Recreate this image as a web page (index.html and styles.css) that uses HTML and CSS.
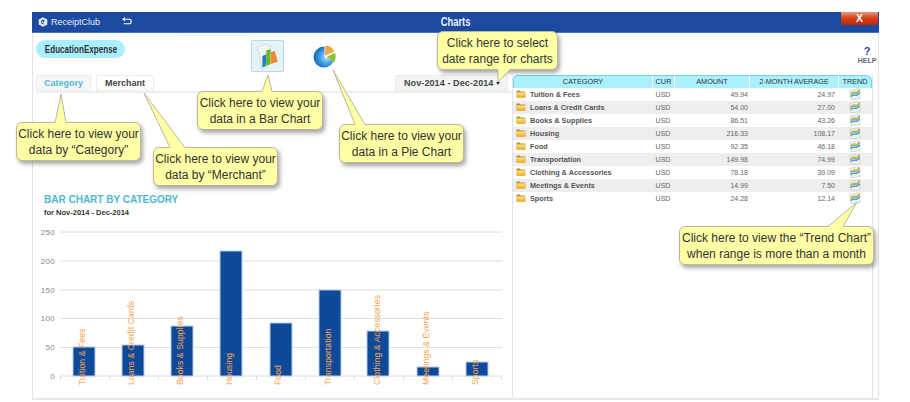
FILE: index.html
```html
<!DOCTYPE html>
<html lang="en">
<head>
<meta charset="utf-8">
<title>Charts</title>
<link rel="stylesheet" href="styles.css">
</head>
<body>
<svg class="defs" width="0" height="0" aria-hidden="true">
  <defs>
    <linearGradient id="fold" x1="0" y1="0" x2="0" y2="1"><stop offset="0" stop-color="#ffe88a"/><stop offset="1" stop-color="#eeaa1c"/></linearGradient>
    <radialGradient id="disc" cx=".62" cy=".52" r=".62"><stop offset="0" stop-color="#c6e8fa"/><stop offset=".45" stop-color="#4aa6ea"/><stop offset="1" stop-color="#0c62bb"/></radialGradient>
    <symbol id="folder" viewBox="0 0 11 9">
      <path d="M.5 2V1.200Q.5.5 1.200.5H4L5 1.600H9.600Q10.400 1.600 10.400 2.400V8.500H.5Z" fill="#b98a2a"/>
      <rect x=".7" y="2.700" width="9.600" height="5.800" fill="url(#fold)"/>
    </symbol>
    <symbol id="trend" viewBox="0 0 12 12">
      <rect x="1.400" y="1.500" width="9.200" height="9.800" fill="#eef0f2" stroke="#c4c8cc" stroke-width=".6" transform="rotate(-8 6 6)"/>
      <path d="M1.500 5.600 5 3.800 7.500 4.400 11 1.400" fill="none" stroke="#f08a2a" stroke-width="1"/>
      <path d="M1.500 6.800 5 5 7.500 5.600 11 2.700" fill="none" stroke="#6cc04a" stroke-width="1.100"/>
      <path d="M1.500 8.600 5 7 7.500 7.400 11 5" fill="none" stroke="#2f86d8" stroke-width="1.100"/>
    </symbol>
  </defs>
</svg>

<main class="window">
  <header class="titlebar">
    <div class="brand">
      <svg class="logo" viewBox="0 0 10 10" aria-hidden="true"><path d="M5 .2 9.300 2.600V7.400L5 9.800.7 7.400V2.600Z" fill="#dfe8f6"/><path d="M5 2.400 7.200 3.700 5.400 4.800 5.400 7.400 3.200 6.200V3.700Z" fill="#1c4a9e"/><path d="M3.900 4 5 4.600V6.100L3.900 5.500Z" fill="#dfe8f6"/></svg>
      <span class="brand-name">ReceiptClub</span>
      <svg class="back" viewBox="0 0 10 8" aria-hidden="true"><path d="M3 .6 1 2.200 3 3.800M1 2.200H7.200Q9.200 2.200 9.200 4.400 9.200 6.800 7.200 6.800H1.600" fill="none" stroke="#fff" stroke-width="1.100"/></svg>
    </div>
    <h1 class="title"><span class="squeeze">Charts</span></h1>
    <button class="close" type="button">X</button>
  </header>

  <div class="content">
    <section class="left">
      <div class="toolbar">
        <span class="pill"><span class="squeeze">EducationExpense</span></span>
        <button class="chart-btn active" type="button" aria-label="Bar chart">
          <svg viewBox="0 0 22 22" aria-hidden="true">
            <path d="M2 3 8 .8 14 2 11 21 6 22Z" fill="#f4f5f3" stroke="#c9cdd0" stroke-width=".5"/>
            <path d="M6.500 11 10 9.500 9.500 20 6.500 21Z" fill="#1f82cf"/>
            <path d="M10 6 13.800 5 13.300 18.500 9.500 19.500Z" fill="#6db52f"/>
            <path d="M14 7.500 17.500 6.500 20 16 13.500 18Z" fill="#ee8a34"/>
          </svg>
        </button>
        <button class="chart-btn pie" type="button" aria-label="Pie chart">
          <svg viewBox="0 0 22 22" aria-hidden="true">
            <circle cx="10.500" cy="11.500" r="10" fill="url(#disc)"/>
            <path d="M11 11 11 0A11 11 0 0 1 22 17Z" fill="#fff"/>
            <path d="M11.500 10 11.800 .8A9.500 9.500 0 0 1 20.500 6.500Z" fill="#f3a641"/>
            <path d="M13 11.500 21 7.500A10 10 0 0 1 20 16.500Z" fill="#87c23c"/>
          </svg>
        </button>
      </div>

      <div class="tabs">
        <span class="tab cat current">Category</span>
        <span class="tab mer">Merchant</span>
        <span class="tab range">Nov-2014 - Dec-2014 <i class="caret"></i></span>
      </div>

      <h2 class="chart-title">BAR CHART BY CATEGORY</h2>
      <p class="chart-sub">for Nov-2014 - Dec-2014</p>

      <svg class="chart" width="476" height="176" viewBox="36 217 476 176" role="img" aria-label="Bar chart by category">
        <g class="grid">
          <path d="M60 232H502M60 261H502M60 290H502M60 318.500H502M60 347.500H502M60 376H502"/>
          <path d="M60.500 376v4M109.500 376v4M158.500 376v4M207.500 376v4M256.500 376v4M305.500 376v4M354.500 376v4M403.500 376v4M452.500 376v4M501.500 376v4"/>
        </g>
        <g class="y-labels">
          <text x="55" y="235">250</text><text x="55" y="264">200</text><text x="55" y="293">150</text><text x="55" y="321">100</text><text x="55" y="350">50</text><text x="55" y="379">0</text>
        </g>
        <g class="bars">
          <rect x="73" y="347" width="22" height="29"/>
          <rect x="122" y="345" width="22" height="31"/>
          <rect x="171" y="326" width="22" height="50"/>
          <rect x="220" y="251" width="22" height="125"/>
          <rect x="270" y="323" width="22" height="53"/>
          <rect x="319" y="290" width="22" height="86"/>
          <rect x="367" y="331" width="22" height="45"/>
          <rect x="417" y="367" width="22" height="9"/>
          <rect x="466" y="362" width="22" height="14"/>
        </g>
        <g class="x-labels">
          <text transform="translate(85 385) rotate(-90)">Tuition &amp; Fees</text>
          <text transform="translate(134 385) rotate(-90)">Loans &amp; Credit Cards</text>
          <text transform="translate(183 385) rotate(-90)">Books &amp; Supplies</text>
          <text transform="translate(232 385) rotate(-90)">Housing</text>
          <text transform="translate(281 385) rotate(-90)">Food</text>
          <text transform="translate(331 385) rotate(-90)">Transportation</text>
          <text transform="translate(380 385) rotate(-90)">Clothing &amp; Accessories</text>
          <text transform="translate(429 385) rotate(-90)">Meetings &amp; Events</text>
          <text transform="translate(478 385) rotate(-90)">Sports</text>
        </g>
      </svg>
    </section>

    <section class="right">
      <div class="right-body">
        <table class="data">
          <thead>
            <tr><th class="c-cat">CATEGORY</th><th class="c-cur">CUR</th><th class="c-amt">AMOUNT</th><th class="c-avg">2-MONTH AVERAGE</th><th class="c-trend">TREND</th></tr>
          </thead>
          <tbody>
            <tr><td class="name"><svg class="folder"><use href="#folder"/></svg>Tuition &amp; Fees</td><td class="cur">USD</td><td class="amt">49.94</td><td class="avg">24.97</td><td class="tr"><svg class="trend"><use href="#trend"/></svg></td></tr>
            <tr><td class="name"><svg class="folder"><use href="#folder"/></svg>Loans &amp; Credit Cards</td><td class="cur">USD</td><td class="amt">54.00</td><td class="avg">27.00</td><td class="tr"><svg class="trend"><use href="#trend"/></svg></td></tr>
            <tr><td class="name"><svg class="folder"><use href="#folder"/></svg>Books &amp; Supplies</td><td class="cur">USD</td><td class="amt">86.51</td><td class="avg">43.26</td><td class="tr"><svg class="trend"><use href="#trend"/></svg></td></tr>
            <tr><td class="name"><svg class="folder"><use href="#folder"/></svg>Housing</td><td class="cur">USD</td><td class="amt">216.33</td><td class="avg">108.17</td><td class="tr"><svg class="trend"><use href="#trend"/></svg></td></tr>
            <tr><td class="name"><svg class="folder"><use href="#folder"/></svg>Food</td><td class="cur">USD</td><td class="amt">92.35</td><td class="avg">46.18</td><td class="tr"><svg class="trend"><use href="#trend"/></svg></td></tr>
            <tr><td class="name"><svg class="folder"><use href="#folder"/></svg>Transportation</td><td class="cur">USD</td><td class="amt">149.98</td><td class="avg">74.99</td><td class="tr"><svg class="trend"><use href="#trend"/></svg></td></tr>
            <tr><td class="name"><svg class="folder"><use href="#folder"/></svg>Clothing &amp; Accessories</td><td class="cur">USD</td><td class="amt">78.18</td><td class="avg">39.09</td><td class="tr"><svg class="trend"><use href="#trend"/></svg></td></tr>
            <tr><td class="name"><svg class="folder"><use href="#folder"/></svg>Meetings &amp; Events</td><td class="cur">USD</td><td class="amt">14.99</td><td class="avg">7.50</td><td class="tr"><svg class="trend"><use href="#trend"/></svg></td></tr>
            <tr><td class="name"><svg class="folder"><use href="#folder"/></svg>Sports</td><td class="cur">USD</td><td class="amt">24.28</td><td class="avg">12.14</td><td class="tr"><svg class="trend"><use href="#trend"/></svg></td></tr>
          </tbody>
        </table>
      </div>
    </section>

    <div class="help"><span class="help-mark">?</span><span class="help-label">HELP</span></div>
  </div>
</main>

<div class="callout co-category">Click here to view your<br>data by “Category”</div>
<div class="callout co-merchant">Click here to view your<br>data by “Merchant”</div>
<div class="callout co-bar">Click here to view your<br>data in a Bar Chart</div>
<div class="callout co-pie">Click here to view your<br>data in a Pie Chart</div>
<div class="callout co-date">Click here to select<br>date range for charts</div>
<div class="callout co-trend">Click here to view the “Trend Chart”<br>when range is more than a month</div>

<svg class="tails" width="910" height="402" viewBox="0 0 910 402" aria-hidden="true">
  <g class="tail-fill">
    <path d="M55 123 61 94 66 123Z"/>
    <path d="M170 148 144 93 185 148Z"/>
    <path d="M262 92 268 75 272 92Z"/>
    <path d="M355 125 333 70 365 125Z"/>
    <path d="M498 69 498 82 510 69Z"/>
    <path d="M828 227 857 202 843 227Z"/>
  </g>
  <g class="tail-line">
    <path d="M55 122.500 61 94 66 122.500"/>
    <path d="M170 147.500 144 93 185 147.500"/>
    <path d="M262 91.500 268 75 272 91.500"/>
    <path d="M355 124.500 333 70 365 124.500"/>
    <path d="M498 70 498 82 510 70"/>
    <path d="M828 226.500 857 202 843 226.500"/>
  </g>
</svg>
</body>
</html>
```
FILE: styles.css
```css
* { box-sizing: border-box; }
html, body { margin: 0; padding: 0; background: #fff; }
body { width: 910px; height: 402px; overflow: hidden; position: relative; font-family: "Liberation Sans", Arial, sans-serif; }
.defs { position: absolute; }
.squeeze { display: inline-block; white-space: nowrap; }

.window { margin: 12px 0 0 32px; width: 847px; height: 388px; display: flex; flex-direction: column; }
.titlebar { height: 21px; flex: none; background: #1c4a9e; border-bottom: 1px solid #3f74c4; display: flex; align-items: flex-start; position: relative; }
.brand { display: flex; align-items: center; height: 20px; padding-left: 6px; width: 380px; }
.logo { width: 10px; height: 10px; }
.brand-name { margin-left: 3px; color: #e4ebf7; font-size: 9px; width: 64px; }
.back { width: 10px; height: 8px; margin-left: 7px; margin-top: -2px; }
.title { margin: 0; width: 88px; text-align: center; color: #e8eef9; font-size: 13px; line-height: 20px; font-weight: bold; }
.title .squeeze { transform: scaleX(.72); }
.close { position: absolute; right: 1px; top: 0; width: 37px; height: 13px; padding: 0; border: 0; border-radius: 0 0 3px 3px; background: linear-gradient(#e59a7c, #d5451c 45%, #b82a08); color: #fff; font: bold 10.500px/13px "Liberation Sans", sans-serif; }

.content { flex: 1; display: grid; grid-template-columns: 479px 361px; border-left: 1px solid #e3e3e3; border-right: 1px solid #e3e3e3; border-bottom: 2px solid #e8e8e8; position: relative; }
.content::before { content: ""; position: absolute; left: 150px; top: 2px; width: 58px; height: 1px; background: #f0f0f0; }
.left { padding: 7px 0 0 3px; min-width: 0; }
.right { padding-top: 42px; display: flex; }
.right-body { flex: 1; border-left: 1px solid #e3e3e3; border-right: 1px solid #e3e3e3; }

.toolbar { display: flex; align-items: flex-start; height: 36px; }
.pill { width: 89px; height: 18px; border-radius: 9px; background: #a9efff; color: #333; font-size: 10.500px; font-weight: bold; line-height: 18px; text-align: center; overflow: hidden; }
.pill .squeeze { transform: scaleX(.77); margin: 0 -10px; }
.chart-btn { width: 33px; height: 32px; padding: 2px 3px; background: #e6f3fb; border: 1px solid #b5d8ee; border-radius: 2px; flex: none; margin-left: 126px; }
.chart-btn.pie { width: 23px; height: 23px; padding: 0; margin: 5px 0 0 29px; background: none; border: 0; }
.chart-btn svg { width: 100%; height: 100%; display: block; }
.help { position: absolute; right: 1px; top: 12px; width: 20px; text-align: center; display: flex; flex-direction: column; font-weight: bold; }
.help-mark { color: #1c4a9e; font-size: 11px; line-height: 12px; }
.help-label { color: #666; font-size: 7px; line-height: 7px; }

.tabs { display: flex; align-items: flex-end; gap: 5px; height: 17px; border-bottom: 2px solid #eee; padding-right: 4px; }
.tab { height: 16px; padding: 0; background: #fff; border: 1px solid #ececec; border-bottom: 0; border-radius: 2px 2px 0 0; color: #444; font-size: 9px; font-weight: bold; line-height: 15px; text-align: center; box-shadow: inset 0 -4px 4px -3px #eee; }
.tab.cat { width: 55px; }
.tab.mer { width: 58px; }
.tab.current { color: #4fb8d3; background: #f8f8f8; }
.tab.range { margin-left: auto; width: 113px; padding-left: 8px; text-align: left; letter-spacing: .1px; background: #f4f4f4; white-space: nowrap; }
.caret { display: inline-block; border: 2px solid transparent; border-top: 3px solid #333; border-bottom: 0; vertical-align: middle; }

.chart-title { margin: 100px 0 0 8px; color: #4fb8d3; font-size: 10px; line-height: 13px; font-weight: bold; }
.chart-sub { margin: 1px 0 0 8px; color: #333; font-size: 7.500px; line-height: 11px; font-weight: bold; }
.chart { display: block; margin-top: -1px; }
.grid path { fill: none; stroke: #dedede; stroke-width: 1; }
.y-labels text { font-size: 8px; fill: #888; text-anchor: end; letter-spacing: .3px; }
.bars rect { fill: #0f4a99; stroke: #b9cde6; stroke-width: 1; }
.x-labels text { font-size: 8.600px; fill: #f7a450; letter-spacing: .1px; }

.data { width: 359px; border-collapse: separate; border-spacing: 0; table-layout: fixed; }
.data th { height: 13px; padding: 0; background: #aaf0fd; border-top: 1px solid #6fd5e6; border-left: 1px solid #fff; color: #333; font-size: 7.300px; font-weight: normal; line-height: 12px; }
.data th.c-cat { width: 139px; border-left: 1px solid #6fd5e6; border-radius: 5px 0 0 0; }
.data th.c-cur { width: 22px; }
.data th.c-amt { width: 75px; }
.data th.c-avg { width: 89px; }
.data th.c-trend { border-right: 1px solid #6fd5e6; border-radius: 0 6px 0 0; }
.data td { height: 13px; padding: 0; font-size: 7px; color: #666; line-height: 13px; white-space: nowrap; }
.data tbody tr:nth-child(even) td { background: #eee; }
.data td.name { color: #555; font-size: 7.300px; font-weight: bold; padding-left: 3px; }
.data td.cur { text-align: center; }
.data td.amt { text-align: right; padding-right: 1px; }
.data td.avg { text-align: right; padding-right: 3px; }
.folder { width: 10px; height: 8px; margin-right: 4px; vertical-align: -1px; }
.data td.tr { text-align: center; }
.trend { width: 12px; height: 12px; vertical-align: top; }

.callout { position: absolute; height: 39px; padding-top: 3px; text-align: center; background: #ffffa5; border: 1px solid #b8b8a0; border-radius: 6px; box-shadow: 2px 3px 4px rgba(0,0,0,.35); color: #333; font-size: 12px; line-height: 16px; white-space: nowrap; }
.co-category { left: 16px; top: 122px; width: 125px; }
.co-merchant { left: 153px; top: 147px; width: 125px; }
.co-bar { left: 197px; top: 91px; width: 126px; }
.co-pie { left: 339px; top: 124px; width: 125px; }
.co-date { left: 437px; top: 31px; width: 121px; }
.co-trend { left: 679px; top: 226px; width: 195px; }
.tails { position: absolute; left: 0; top: 0; pointer-events: none; }
.tail-fill path { fill: #ffffa5; }
.tail-line path { fill: none; stroke: #b8b8a0; stroke-width: 1; }
```
